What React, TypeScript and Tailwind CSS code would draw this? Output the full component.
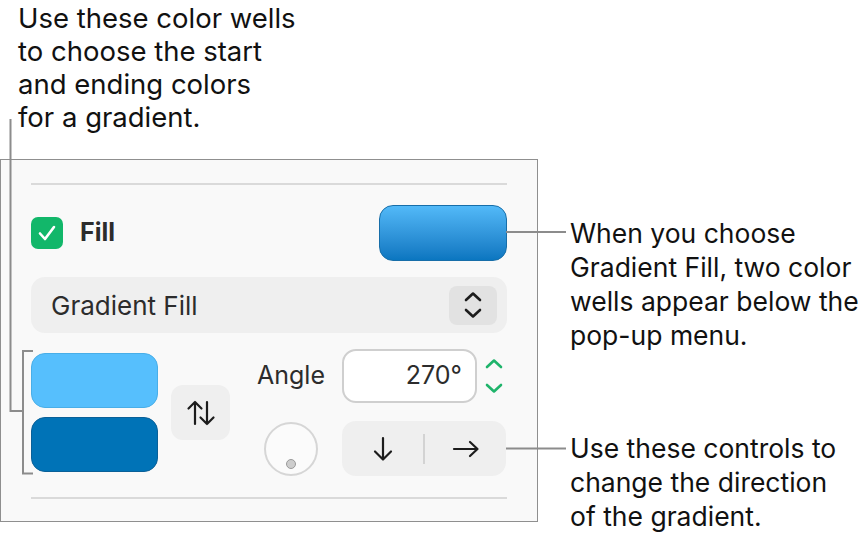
import React from "react";

function Chevrons({ className, tall }: { className?: string; tall?: boolean }) {
  const h = tall ? 36 : 28;
  return (
    <svg width="18" height={h} viewBox={`0 0 18 ${h}`} className={className} fill="none">
      <path d="M2 9 L9 2.5 L16 9" stroke="currentColor" strokeWidth="2.6" strokeLinecap="round" strokeLinejoin="round" />
      <path d={`M2 ${h - 9} L9 ${h - 2.5} L16 ${h - 9}`} stroke="currentColor" strokeWidth="2.6" strokeLinecap="round" strokeLinejoin="round" />
    </svg>
  );
}

function ColorWells() {
  return (
    <div className="flex items-center">
      <div className="flex flex-col gap-[9px]">
        <div className="w-[127px] h-[55px] rounded-[14px] bg-[#56bffd] border border-[#48aee8]" />
        <div className="w-[127px] h-[55px] rounded-[14px] bg-[#0073b7] border border-[#0a6098]" />
      </div>
      {/* swap start/end colors */}
      <div className="ml-[13px] w-[59px] h-[55px] rounded-[12px] bg-[#efefef] flex items-center justify-center">
        <svg width="32" height="26" viewBox="0 0 32 26" fill="none" stroke="#1c1c1c" strokeWidth="2.2" strokeLinecap="round" strokeLinejoin="round">
          <path d="M10 24 V2 M3.5 8.5 L10 2 L16.5 8.5" />
          <path d="M22 2 V24 M15.5 17.5 L22 24 L28.5 17.5" />
        </svg>
      </div>
    </div>
  );
}

function AngleControls() {
  return (
    <div className="ml-[27px] flex flex-col gap-[18px]">
      <div className="flex items-center">
        <span className="w-[85px] text-[25px] text-[#2c2c2c]">Angle</span>
        <div className="w-[135px] h-[54px] rounded-[14px] bg-white border-2 border-[#cfcfcf] flex items-center justify-end pr-[13px] text-[25px] text-[#2c2c2c]">
          270°
        </div>
        <Chevrons tall className="ml-[8px] text-[#1fb46b]" />
      </div>
      <div className="flex items-center">
        <div className="ml-[7px] w-[54px] h-[54px] rounded-full border-2 border-[#d6d6d6] bg-[#fbfbfb] flex items-end justify-center pb-[5px]">
          <div className="w-[10px] h-[10px] rounded-full bg-[#cdcdcd] border border-[#9a9a9a]" />
        </div>
        <div className="ml-[24px] w-[164px] h-[55px] rounded-[14px] bg-[#efefef] flex items-center">
          <div className="flex-1 flex justify-center">
            <svg width="22" height="26" viewBox="0 0 22 26" fill="none" stroke="#1c1c1c" strokeWidth="2.2" strokeLinecap="round" strokeLinejoin="round">
              <path d="M11 2 V23 M3 15.5 L11 23.5 L19 15.5" />
            </svg>
          </div>
          <div className="w-[2px] h-[30px] bg-[#d3d3d3]" />
          <div className="flex-1 flex justify-center">
            <svg width="28" height="18" viewBox="0 0 28 18" fill="none" stroke="#1c1c1c" strokeWidth="2.2" strokeLinecap="round" strokeLinejoin="round">
              <path d="M2 9 H25 M18 2 L25.5 9 L18 16" />
            </svg>
          </div>
        </div>
      </div>
    </div>
  );
}

function FillPanel() {
  return (
    <div className="w-[538px] h-[363px] shrink-0 border border-[#8f8f8f] bg-[#f9f9f9] pt-[23px] px-[30px]">
      <div className="h-[2px] bg-[#dadada]" />

      {/* Fill row */}
      <div className="mt-[20px] h-[56px] flex items-center">
        <div className="w-[32px] h-[32px] rounded-[7px] bg-[#12b76a] flex items-center justify-center">
          <svg width="20" height="18" viewBox="0 0 20 18" fill="none" stroke="white" strokeWidth="2.6" strokeLinecap="round" strokeLinejoin="round">
            <path d="M3 9.5 L8 15 L17 3" />
          </svg>
        </div>
        <span className="ml-[17px] text-[25px] font-bold text-[#2c2c2c]">Fill</span>
        <div className="ml-auto w-[128px] h-[56px] rounded-[14px] border border-[#176ea9] bg-gradient-to-b from-[#52b9f8] to-[#0a76c0]" />
      </div>

      {/* Fill type pop-up */}
      <div className="mt-[16px] h-[56px] rounded-[14px] bg-[#efefef] flex items-center pl-[20px] pr-[10px]">
        <span className="text-[26px] text-[#2c2c2c]">Gradient Fill</span>
        <div className="ml-auto w-[48px] h-[39px] rounded-[8px] bg-[#e2e2e2] flex items-center justify-center text-[#1c1c1c]">
          <Chevrons />
        </div>
      </div>

      {/* Gradient controls */}
      <div className="mt-[16px] flex items-center">
        <ColorWells />
        <AngleControls />
      </div>

      <div className="mt-[21px] h-[2px] bg-[#dadada]" />
    </div>
  );
}

export default function App() {
  return (
    <div className="relative w-[868px] h-[546px] bg-white overflow-hidden font-['Inter','Liberation_Sans',sans-serif] text-[#111]">
      <div className="pt-[2px] pl-[18px] text-[27.5px] leading-[33px]">
        <p>Use these color wells</p>
        <p>to choose the start</p>
        <p>and ending colors</p>
        <p>for a gradient.</p>
      </div>

      <div className="mt-[25px] flex">
        <FillPanel />
        <div className="pl-[32px] pt-[57px] text-[26.5px] leading-[34px] whitespace-nowrap">
          <p>When you choose</p>
          <p>Gradient Fill, two color</p>
          <p>wells appear below the</p>
          <p>pop-up menu.</p>
          <div className="mt-[79px]">
            <p>Use these controls to</p>
            <p>change the direction</p>
            <p>of the gradient.</p>
          </div>
        </div>
      </div>

      {/* callout lines */}
      <svg className="absolute inset-0 pointer-events-none" width="868" height="546" fill="none" stroke="#8c8c8c" strokeWidth="2">
        <path d="M10.5 119 V411 H23" />
        <path d="M33 351 H23 V473.5 H33" />
        <path d="M506 232 H566" />
        <path d="M506 448.5 H566" />
      </svg>
    </div>
  );
}
